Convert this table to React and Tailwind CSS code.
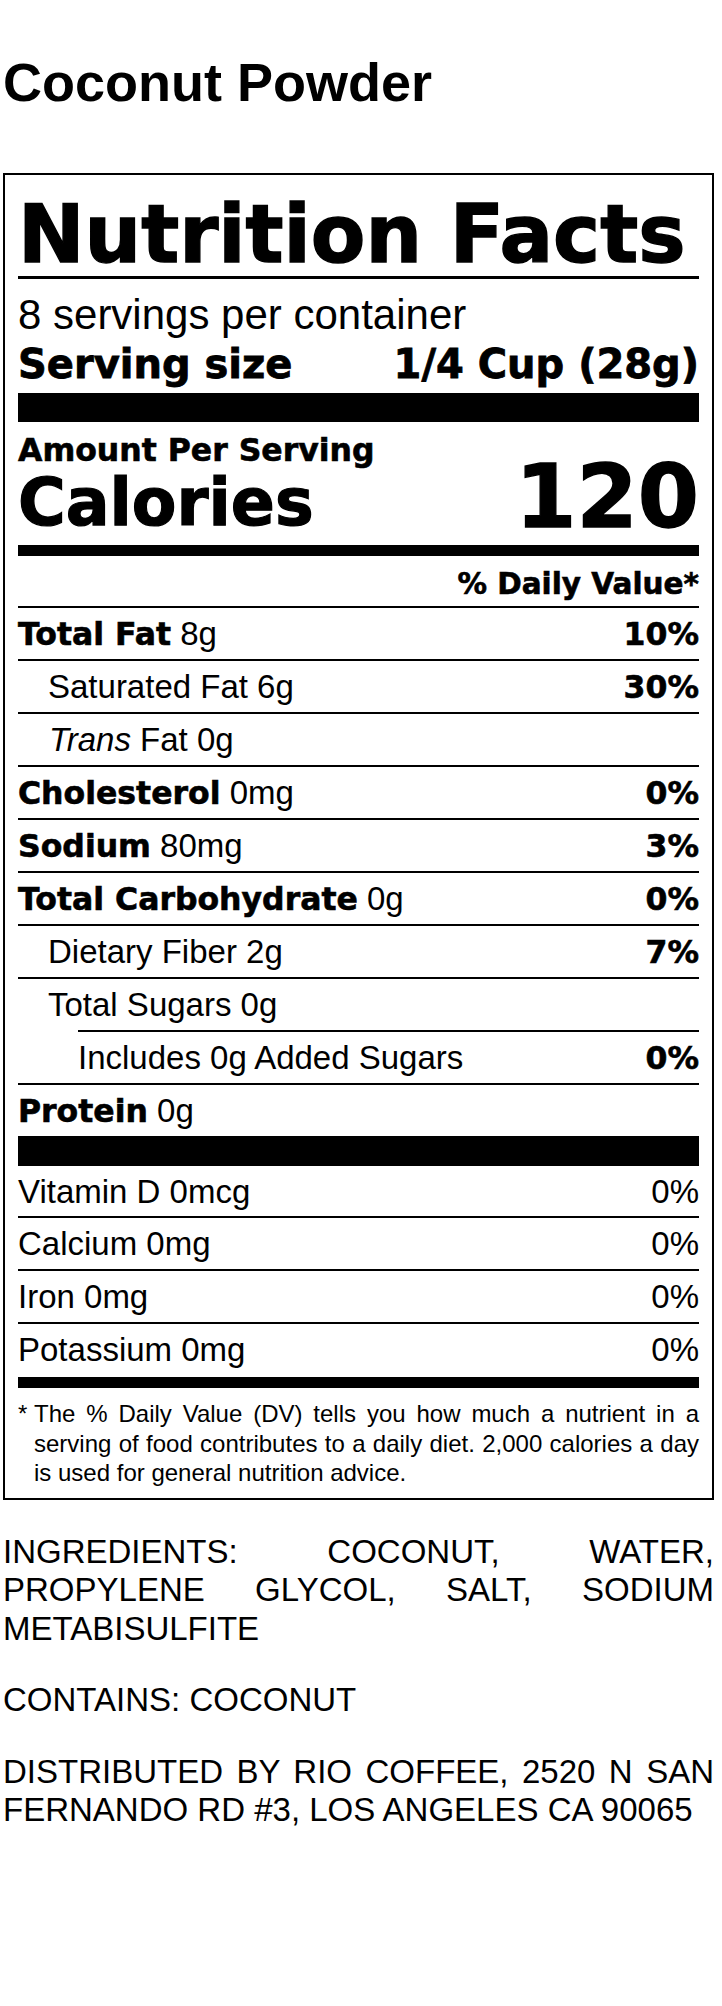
import React from "react";

const REG = "font-['Liberation_Sans',Arial,sans-serif]";

function Row({ children, right, className = "" }) {
  return (
    <div className={`flex items-center justify-between ${className}`}>
      <div className="leading-[37px] whitespace-nowrap">{children}</div>
      <div className="leading-[37px] whitespace-nowrap">{right}</div>
    </div>
  );
}

function B({ children, className = "" }) {
  return (
    <span
      className={`font-['DejaVu_Sans',sans-serif] font-bold text-[31.5px] [-webkit-text-stroke:0.6px_black] ${className}`}
    >
      {children}
    </span>
  );
}

export default function App() {
  return (
    <div className={`min-h-[2006px] bg-white text-black pl-[3px] w-[714px] ${REG}`}>
      <h1 className="pt-[51px] text-[54px] leading-[62px] font-bold">Coconut Powder</h1>

      <div className="mt-[60px] border-2 border-black px-[13px] pt-[20px] pb-[10px] text-[33px]">
        <div className="font-['DejaVu_Sans',sans-serif] font-bold text-[79.5px] leading-[80px] whitespace-nowrap [-webkit-text-stroke:1.4px_black]">
          Nutrition Facts
        </div>
        <div className="mt-[1px] h-[3px] bg-black" />
        <div className="mt-[13px] text-[42px] leading-[46px] whitespace-nowrap">8 servings per container</div>
        <div className="mt-[3px] flex justify-between font-['DejaVu_Sans',sans-serif] font-bold text-[40px] leading-[46px] whitespace-nowrap [-webkit-text-stroke:0.8px_black]">
          <span>Serving size</span>
          <span>1/4 Cup (28g)</span>
        </div>
        <div className="mt-[6px] h-[29px] bg-black" />

        <div className="flex items-end justify-between">
          <div>
            <div className="mt-[10px] font-['DejaVu_Sans',sans-serif] font-bold text-[31.5px] leading-[36px] whitespace-nowrap [-webkit-text-stroke:0.6px_black]">
              Amount Per Serving
            </div>
            <div className="mt-[5px] font-['DejaVu_Sans',sans-serif] font-bold text-[65px] leading-[60px] whitespace-nowrap [-webkit-text-stroke:1.2px_black]">
              Calories
            </div>
          </div>
          <div className="mb-[1px] font-['DejaVu_Sans',sans-serif] font-bold text-[88px] leading-[70px] [-webkit-text-stroke:1.4px_black]">
            120
          </div>
        </div>
        <div className="mt-[12px] h-[11px] bg-black" />

        <div className="flex h-[50px] justify-end pt-[10px]">
          <span className="font-['DejaVu_Sans',sans-serif] font-bold text-[29.5px] leading-[36px] whitespace-nowrap [-webkit-text-stroke:0.6px_black]">
            % Daily Value*
          </span>
        </div>

        <Row className="h-[53px] border-t-2 border-black" right={<B>10%</B>}>
          <B>Total Fat</B> 8g
        </Row>
        <Row className="h-[53px] border-t-2 border-black" right={<B>30%</B>}>
          <span className="pl-[30px]">Saturated Fat 6g</span>
        </Row>
        <Row className="h-[53px] border-t-2 border-black" right={null}>
          <span className="pl-[31px]">
            <i>Trans</i> Fat 0g
          </span>
        </Row>
        <Row className="h-[53px] border-t-2 border-black" right={<B>0%</B>}>
          <B>Cholesterol</B> 0mg
        </Row>
        <Row className="h-[53px] border-t-2 border-black" right={<B>3%</B>}>
          <B>Sodium</B> 80mg
        </Row>
        <Row className="h-[53px] border-t-2 border-black" right={<B>0%</B>}>
          <B>Total Carbohydrate</B> 0g
        </Row>
        <Row className="h-[53px] border-t-2 border-black" right={<B>7%</B>}>
          <span className="pl-[30px]">Dietary Fiber 2g</span>
        </Row>
        <Row className="h-[53px] border-t-2 border-black" right={null}>
          <span className="pl-[30px]">Total Sugars 0g</span>
        </Row>
        <Row className="ml-[60px] h-[53px] border-t-2 border-black" right={<B>0%</B>}>
          Includes 0g Added Sugars
        </Row>
        <Row className="h-[53px] border-t-2 border-black" right={null}>
          <B>Protein</B> 0g
        </Row>
        <div className="h-[30px] bg-black" />

        <Row className="h-[50px]" right="0%">
          Vitamin D 0mcg
        </Row>
        <Row className="h-[53px] border-t-2 border-black" right="0%">
          Calcium 0mg
        </Row>
        <Row className="h-[53px] border-t-2 border-black" right="0%">
          Iron 0mg
        </Row>
        <Row className="h-[53px] border-t-2 border-black" right="0%">
          Potassium 0mg
        </Row>
        <div className="mt-[2px] h-[11px] bg-black" />

        <div className="flex pt-[11px] text-[24px] leading-[29.5px]">
          <span className="w-[16px] shrink-0">*</span>
          <p className="flex-1 text-justify">
            The % Daily Value (DV) tells you how much a nutrient in a serving of food contributes to a
            daily diet. 2,000 calories a day is used for general nutrition advice.
          </p>
        </div>
      </div>

      <div className="text-[33px] leading-[38.5px]">
        <p className="mt-[33px] text-justify">
          INGREDIENTS: COCONUT, WATER, PROPYLENE GLYCOL, SALT, SODIUM METABISULFITE
        </p>
        <p className="mt-[33px]">CONTAINS: COCONUT</p>
        <p className="mt-[33px] text-justify">
          DISTRIBUTED BY RIO COFFEE, 2520 N SAN FERNANDO RD #3, LOS ANGELES CA 90065
        </p>
      </div>
    </div>
  );
}
